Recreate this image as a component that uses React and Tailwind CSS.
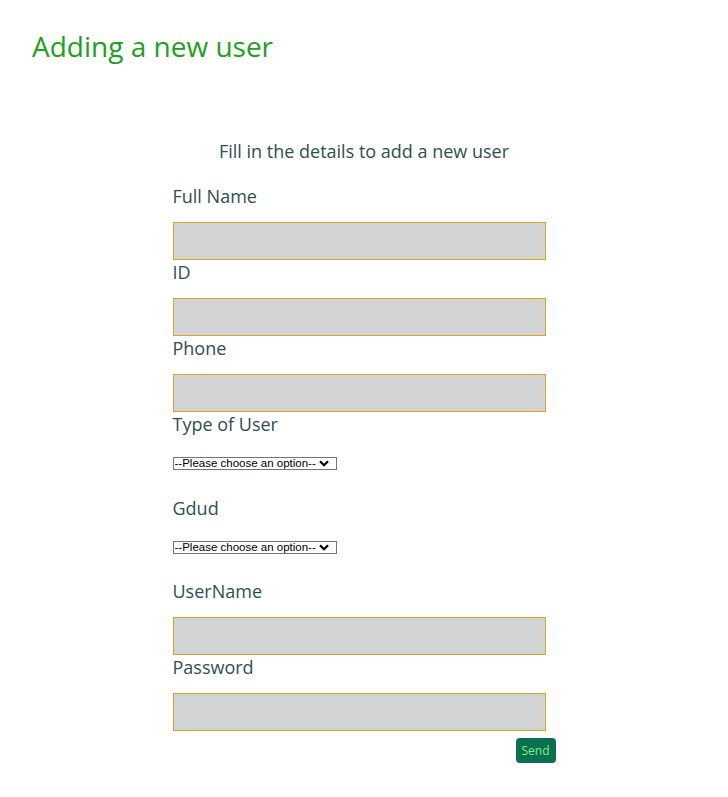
import React from "react";

const font = { fontFamily: '"Open Sans", "Noto Sans", sans-serif' };

function Field({ label }) {
  return (
    <div className="flex flex-col">
      <label className="block text-[18px] leading-[24px] text-[#2f4f4f] mb-[14px]">{label}</label>
      <input
        type="text"
        className="block w-[373px] h-[38px] bg-[#d1d3d5] border border-[#daa520] outline-none"
      />
    </div>
  );
}

function Select({ label }) {
  return (
    <div className="flex flex-col">
      <label className="block text-[18px] leading-[24px] text-[#2f4f4f] mb-[21px]">{label}</label>
      <div className="relative w-[164px] h-[13px] mb-[25.5px]">
        <select
          className="appearance-none block w-[164px] h-[13px] border border-[#767676] bg-white text-black text-[11.5px] leading-[11px] pl-[1px] pr-[16px] py-0 outline-none"
          style={{ fontFamily: '"Liberation Sans", Arial, sans-serif' }}
          defaultValue=""
        >
          <option value="">--Please choose an option--</option>
        </select>
        <svg
          className="absolute right-[8px] top-[3px] pointer-events-none"
          width="10"
          height="7"
          viewBox="0 0 10 7"
        >
          <path d="M1 1.3 L5 5.2 L9 1.3" fill="none" stroke="#000" strokeWidth="2.3" />
        </svg>
      </div>
    </div>
  );
}

export default function App() {
  return (
    <div className="min-h-[797px] bg-white" style={font}>
      <h1 className="pl-[32px] pt-[27px] text-[28px] leading-[38px] text-[#21a021] font-normal">
        Adding a new user
      </h1>
      <div className="w-[383px] mx-auto mt-[74px] flex flex-col">
        <p className="text-center text-[18px] leading-[24px] text-[#2f4f4f] mb-[21px]">
          Fill in the details to add a new user
        </p>
        <Field label="Full Name" />
        <Field label="ID" />
        <Field label="Phone" />
        <Select label="Type of User" />
        <Select label="Gdud" />
        <Field label="UserName" />
        <Field label="Password" />
        <div className="flex justify-end mt-[7px]">
          <button className="w-[40px] h-[25px] rounded-[4px] bg-[#0a7050] text-[#7ef07e] text-[12px] leading-[25px]">
            Send
          </button>
        </div>
      </div>
    </div>
  );
}
